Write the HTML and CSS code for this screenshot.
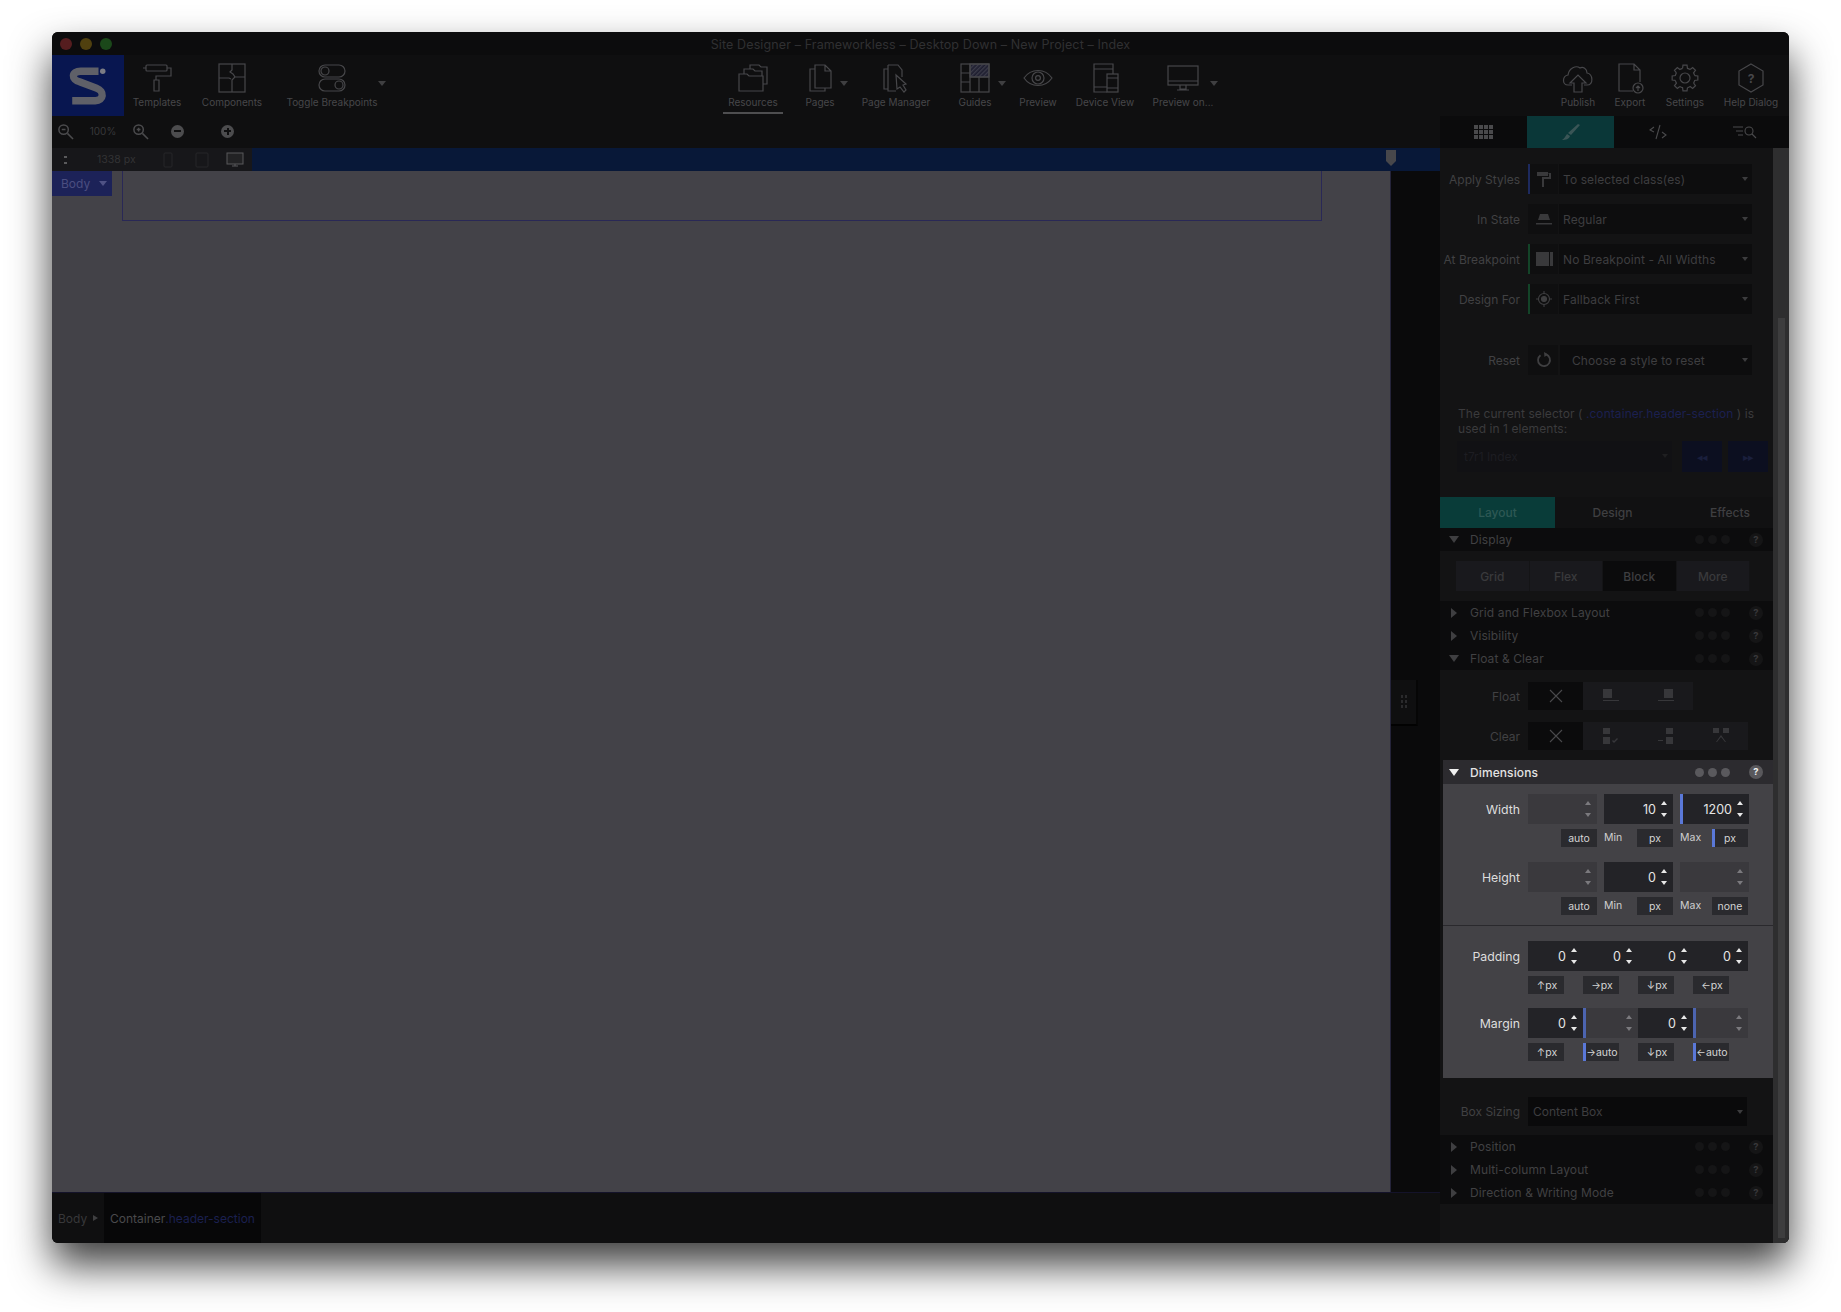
FILE: index.html
```html
<!DOCTYPE html>
<html lang="en">
<head>
<meta charset="utf-8">
<title>Site Designer</title>
<link rel="stylesheet" href="styles.css">
</head>
<body>
<svg class="defs" width="0" height="0" aria-hidden="true">
  <defs>
    <path id="gear-tooth" d="M13.58 6.3 13.97 3.16H18.03L18.42 6.3A10 10 0 0 1 21.15 7.43"/>
    <pattern id="hatch" width="3" height="3" patternUnits="userSpaceOnUse" patternTransform="rotate(45)">
      <rect width="3" height="3" fill="#1f1f30"/>
      <rect width="1.3" height="3" fill="#3c3c4a"/>
    </pattern>
  </defs>
</svg>
<div class="window">
  <header class="titlebar">
    <div class="lights"><span class="light red"></span><span class="light amber"></span><span class="light green"></span></div>
    <div class="title">Site Designer – Frameworkless – Desktop Down – New Project – Index</div>
    <div></div>
  </header>

  <nav class="toolbar">
    <div class="logo">
      <svg width="38" height="40" viewBox="0 0 36 38" fill="none">
        <path d="M28 5H11C2 5 2 13 10 15L26 21C34 24 33 33 25 33H3" stroke="#5f6068" stroke-width="7"/>
        <circle cx="32" cy="5" r="2.6" fill="#7b7c84"/>
      </svg>
    </div>
    <div class="tools tools-left">
      <div class="tool w66">
        <svg class="tool-icon" viewBox="0 0 32 32"><rect x="5" y="3" width="21" height="6" rx="1"/><path d="M5 6H2M26 6h4v8H15v4"/><path d="M13 18h5v11h-5z"/></svg>
        <span>Templates</span>
      </div>
      <div class="tool w84">
        <svg class="tool-icon" viewBox="0 0 32 32"><rect x="3" y="2" width="26" height="28"/><path d="M16 2v6l-2 2 3 2 2 3-3 3v12M3 16h10l2 1M18 15h11"/></svg>
        <span>Components</span>
      </div>
      <div class="tool w116">
        <svg class="tool-icon" viewBox="0 0 32 32"><rect x="3" y="3" width="26" height="12" rx="6"/><rect x="3" y="17" width="26" height="12" rx="6"/><circle cx="9" cy="9" r="4"/><circle cx="23" cy="23" r="4"/></svg>
        <span>Toggle Breakpoints</span>
        <i class="tool-arrow"></i>
      </div>
    </div>
    <div class="tools tools-center">
      <div class="tool tool-active w70">
        <svg class="tool-icon" viewBox="0 0 32 32"><path d="M2 12h8l2 2h14v15H2zM7 12V7h9l2 2h7v5M13 7V3h9l2 2h6v17h-4"/></svg>
        <span>Resources</span>
      </div>
      <div class="tool w64">
        <svg class="tool-icon" viewBox="0 0 32 32"><path d="M11 3h10l6 6v17H11zM21 3v6h6M11 7H6v22h15v-3"/></svg>
        <span>Pages</span>
        <i class="tool-arrow"></i>
      </div>
      <div class="tool w88">
        <svg class="tool-icon" viewBox="0 0 32 32"><path d="M8 27H4V7h4M8 3h10l4 5v7M8 3v26h8"/><path d="M16 13l10 9-3 1 3 5-2 2-4-5-3 2z"/></svg>
        <span>Page Manager</span>
      </div>
      <div class="tool w70">
        <svg class="tool-icon" viewBox="0 0 32 32"><rect x="11" y="2" width="19" height="13" fill="url(#hatch)"/><rect x="2" y="2" width="28" height="28"/><path d="M11 2v28M2 11h9M2 20h9M11 15h19M20 15v15"/></svg>
        <span>Guides</span>
        <i class="tool-arrow"></i>
      </div>
      <div class="tool w56">
        <svg class="tool-icon" viewBox="0 0 32 32"><path d="M2 16c7-10 21-10 28 0-7 10-21 10-28 0z"/><circle cx="16" cy="16" r="6"/><circle cx="16" cy="16" r="2.4"/></svg>
        <span>Preview</span>
      </div>
      <div class="tool w78">
        <svg class="tool-icon" viewBox="0 0 32 32"><path d="M18 30H5V2h19v10M5 7h19M5 25h13"/><rect x="18" y="12" width="11" height="18"/><path d="M18 16h11M18 26h11"/></svg>
        <span>Device View</span>
      </div>
      <div class="tool w78">
        <svg class="tool-icon" viewBox="0 0 32 32"><rect x="1" y="4" width="30" height="19"/><path d="M1 19h30M13 23v4h6v-4M10 28h12"/></svg>
        <span>Preview on...</span>
        <i class="tool-arrow"></i>
      </div>
    </div>
    <div class="tools tools-right">
      <div class="tool w52">
        <svg class="tool-icon" viewBox="0 0 32 32"><path d="M10 23H6C0 23 0 14 6 13 7 6 14 3 18 6c3-2 7 1 7 5 6 1 7 12 0 12h-3"/><path d="M12 30v-9H8l8-8 8 8h-4v9z"/></svg>
        <span>Publish</span>
      </div>
      <div class="tool w52">
        <svg class="tool-icon" viewBox="0 0 32 32"><path d="M19 29H5V2h15l6 6v12M20 2v6h6"/><circle cx="24" cy="26" r="5"/><path d="M24 29v-5M22 26l2-2 2 2"/></svg>
        <span>Export</span>
      </div>
      <div class="tool w58">
        <svg class="tool-icon" viewBox="0 0 32 32">
          <use href="#gear-tooth"/><use href="#gear-tooth" transform="rotate(45 16 16)"/><use href="#gear-tooth" transform="rotate(90 16 16)"/><use href="#gear-tooth" transform="rotate(135 16 16)"/><use href="#gear-tooth" transform="rotate(180 16 16)"/><use href="#gear-tooth" transform="rotate(225 16 16)"/><use href="#gear-tooth" transform="rotate(270 16 16)"/><use href="#gear-tooth" transform="rotate(315 16 16)"/>
          <circle cx="16" cy="16" r="5"/>
        </svg>
        <span>Settings</span>
      </div>
      <div class="tool w74">
        <svg class="tool-icon" viewBox="0 0 32 32"><path d="M16 2l12 7v14l-12 7-12-7V9z"/><text class="help-mark" x="16" y="21" text-anchor="middle">?</text></svg>
        <span>Help Dialog</span>
      </div>
    </div>
  </nav>

  <div class="main">
    <section class="workspace">
      <div class="zoombar">
        <svg class="zoom-icon" viewBox="0 0 18 18"><circle cx="7" cy="7" r="5"/><path d="M11 11l6 6M5 7h4"/></svg>
        <span class="zoom-value">100%</span>
        <svg class="zoom-icon" viewBox="0 0 18 18"><circle cx="7" cy="7" r="5"/><path d="M11 11l6 6M5 7h4M7 5v4"/></svg>
        <span class="zoom-btn zoom-minus"></span>
        <span class="zoom-btn zoom-plus"></span>
      </div>
      <div class="ruler">
        <div class="ruler-head">
          <span class="ruler-dots"></span>
          <span class="ruler-size">1338 px</span>
          <svg class="ruler-dev dev-phone" viewBox="0 0 12 16"><rect x="2" y="1" width="8" height="14" rx="1"/></svg>
          <svg class="ruler-dev dev-tablet" viewBox="0 0 14 16"><rect x="1" y="1" width="12" height="14" rx="1"/></svg>
          <svg class="ruler-dev dev-desktop" viewBox="0 0 18 16"><rect x="1" y="1" width="16" height="11"/><path d="M6 14h6M9 12v2"/></svg>
        </div>
        <svg class="ruler-thumb" width="10" height="16" viewBox="0 0 10 16"><path d="M0 0h10v11l-5 5-5-5z"/></svg>
      </div>
      <div class="stage">
        <div class="canvas">
          <div class="body-tag">Body <i class="caret-tag"></i></div>
          <div class="outline"></div>
        </div>
        <div class="gutter">
          <div class="splitter"><span class="splitter-dots"></span></div>
        </div>
      </div>
      <footer class="status">
        <div class="crumb">Body <i class="crumb-arrow"></i></div>
        <div class="crumb crumb-current">Container<span class="link">.header-section</span></div>
      </footer>
    </section>

    <aside class="side">
      <div class="side-tabs">
        <div class="side-tab">
          <svg width="20" height="14" viewBox="0 0 20 14" class="icon-fill"><path d="M0 0h4v4H0zM5 0h4v4H5zM10 0h4v4h-4zM15 0h4v4h-4zM0 5h4v4H0zM5 5h4v4H5zM10 5h4v4h-4zM15 5h4v4h-4zM0 10h4v4H0zM5 10h4v4H5zM10 10h4v4h-4zM15 10h4v4h-4z"/></svg>
        </div>
        <div class="side-tab side-tab-active">
          <svg width="18" height="16" viewBox="0 0 18 16" class="icon-fill"><path d="M16 0l2 1-9 10-3-2zM5 10l3 2c-1 3-4 4-8 4 2-1 3-3 5-6z"/></svg>
        </div>
        <div class="side-tab">
          <svg width="18" height="16" viewBox="0 0 18 16" class="icon-line"><path d="M5 3L1 6l4 2M13 8l4 3-4 3M11 1L7 15"/></svg>
        </div>
        <div class="side-tab">
          <svg width="24" height="14" viewBox="0 0 24 14" class="icon-line"><path d="M0 2h10M3 6h7M5 10h5"/><circle cx="16" cy="6" r="4"/><path d="M19 9l4 4"/></svg>
        </div>
      </div>
      <div class="side-body">
        <div class="panel">
          <div class="opt-group">
            <div class="opt-row">
              <label class="opt-label">Apply Styles</label>
              <div class="picker">
                <span class="picker-icon strip-blue"><svg width="16" height="16" viewBox="0 0 16 16" class="icon-fill"><path d="M1 1h11v4H1zM12 2h3v6H8v2H6V6h7V3zM6 10h2v6H6z"/></svg></span>
                <div class="select">To selected class(es)<i class="caret"></i></div>
              </div>
            </div>
            <div class="opt-row">
              <label class="opt-label">In State</label>
              <div class="picker">
                <span class="picker-icon"><svg width="16" height="12" viewBox="0 0 16 12" class="icon-fill"><path d="M4 1h8l2 6H2zM0 10h16v1.500H0z"/></svg></span>
                <div class="select">Regular<i class="caret"></i></div>
              </div>
            </div>
            <div class="opt-row">
              <label class="opt-label">At Breakpoint</label>
              <div class="picker">
                <span class="picker-icon strip-green"><svg width="17" height="14" viewBox="0 0 17 14" class="icon-fill"><path d="M0 0h13v14H0zM14 0h3v14h-3z"/></svg></span>
                <div class="select">No Breakpoint - All Widths<i class="caret"></i></div>
              </div>
            </div>
            <div class="opt-row">
              <label class="opt-label">Design For</label>
              <div class="picker">
                <span class="picker-icon strip-green"><svg width="16" height="16" viewBox="0 0 16 16" class="icon-line"><circle cx="8" cy="8" r="5.500"/><circle class="icon-dot" cx="8" cy="8" r="2.500"/><path d="M8 0v3M8 13v3M0 8h3M13 8h3"/></svg></span>
                <div class="select">Fallback First<i class="caret"></i></div>
              </div>
            </div>
          </div>

          <div class="opt-row reset-row">
            <label class="opt-label">Reset</label>
            <div class="picker">
              <span class="picker-icon picker-gap"><svg width="16" height="16" viewBox="0 0 16 16" class="icon-line icon-thick"><path d="M4.500 3.200A6 6 0 1 0 10 2.400"/><path class="icon-head" d="M8 0l4 2.200L8.500 5z"/></svg></span>
              <div class="select select-indent">Choose a style to reset<i class="caret"></i></div>
            </div>
          </div>

          <p class="selector-note">The current selector ( <span class="link">.container.header-section</span> ) is used in 1 elements:</p>
          <div class="selector-tools">
            <div class="selector-select">t7r1 Index<i class="caret caret-faint"></i></div>
            <div class="nav-btn">◂◂</div>
            <div class="nav-btn">▸▸</div>
          </div>

          <div class="sub-tabs">
            <div class="sub-tab sub-tab-active">Layout</div>
            <div class="sub-tab">Design</div>
            <div class="sub-tab">Effects</div>
          </div>

          <div class="head"><i class="tri tri-down"></i><span class="head-name">Display</span><span class="dots"><i></i><i></i><i></i></span><b class="help">?</b></div>
          <div class="display-body">
            <div class="seg">Grid</div><div class="seg">Flex</div><div class="seg seg-on">Block</div><div class="seg">More</div>
          </div>
          <div class="head"><i class="tri tri-right"></i><span class="head-name">Grid and Flexbox Layout</span><span class="dots"><i></i><i></i><i></i></span><b class="help">?</b></div>
          <div class="head"><i class="tri tri-right"></i><span class="head-name">Visibility</span><span class="dots"><i></i><i></i><i></i></span><b class="help">?</b></div>
          <div class="head"><i class="tri tri-down"></i><span class="head-name">Float &amp; Clear</span><span class="dots"><i></i><i></i><i></i></span><b class="help">?</b></div>
          <div class="float-body">
            <div class="float-row">
              <label class="opt-label">Float</label>
              <div class="float-btn float-on"><svg width="14" height="14" viewBox="0 0 14 14" class="icon-line"><path d="M1 1l12 12M13 1L1 13"/></svg></div>
              <div class="float-btn"><svg width="16" height="14" viewBox="0 0 16 14" class="icon-fill"><path d="M0 0h9v9H0zM0 11h16v1H0z"/></svg></div>
              <div class="float-btn"><svg width="16" height="14" viewBox="0 0 16 14" class="icon-fill"><path d="M6 0h9v9H6zM0 11h16v1H0z"/></svg></div>
            </div>
            <div class="float-row">
              <label class="opt-label">Clear</label>
              <div class="float-btn float-on"><svg width="14" height="14" viewBox="0 0 14 14" class="icon-line"><path d="M1 1l12 12M13 1L1 13"/></svg></div>
              <div class="float-btn"><svg width="16" height="16" viewBox="0 0 16 16" class="icon-fill"><path d="M0 0h7v6H0zM0 9h7v7H0zM9 13l1-1 1 1 3-3 1 1-4 4z"/></svg></div>
              <div class="float-btn"><svg width="16" height="16" viewBox="0 0 16 16" class="icon-fill"><path d="M8 0h7v6H8zM8 9h7v7H8zM0 12h5v1H0z"/></svg></div>
              <div class="float-btn"><svg width="16" height="16" viewBox="0 0 16 16" class="icon-fill"><path d="M0 0h6v5H0zM10 0h6v5h-6zM3 14l5-7 5 7h-1L8 9l-4 5z"/></svg></div>
            </div>
          </div>

          <section class="dims">
            <div class="head dims-head"><i class="tri tri-down"></i><span class="head-name">Dimensions</span><span class="dots"><i></i><i></i><i></i></span><b class="help">?</b></div>
            <div class="dims-body">
              <div class="dim-block">
                <div class="dim-row">
                  <label class="dim-label">Width</label>
                  <div class="field"><span class="stepper stepper-dim"></span></div>
                  <div class="field field-dark">10<span class="stepper"></span></div>
                  <div class="field field-dark marked">1200<span class="stepper"></span></div>
                </div>
                <div class="unit-row">
                  <div class="unit-cell"><span class="unit">auto</span></div>
                  <div class="unit-cell"><span class="unit-name">Min</span><span class="unit">px</span></div>
                  <div class="unit-cell"><span class="unit-name">Max</span><span class="unit marked">px</span></div>
                </div>
              </div>
              <div class="dim-block">
                <div class="dim-row">
                  <label class="dim-label">Height</label>
                  <div class="field"><span class="stepper stepper-dim"></span></div>
                  <div class="field field-dark">0<span class="stepper"></span></div>
                  <div class="field"><span class="stepper stepper-dim"></span></div>
                </div>
                <div class="unit-row">
                  <div class="unit-cell"><span class="unit">auto</span></div>
                  <div class="unit-cell"><span class="unit-name">Min</span><span class="unit">px</span></div>
                  <div class="unit-cell"><span class="unit-name">Max</span><span class="unit">none</span></div>
                </div>
              </div>
              <div class="dim-sep"></div>
              <div class="box-block">
                <div class="dim-row box-row">
                  <label class="dim-label">Padding</label>
                  <div class="boxes">
                    <div class="box-field">0<span class="stepper"></span></div>
                    <div class="box-field">0<span class="stepper"></span></div>
                    <div class="box-field">0<span class="stepper"></span></div>
                    <div class="box-field">0<span class="stepper"></span></div>
                  </div>
                </div>
                <div class="box-units">
                  <div class="box-unit"><span>↑</span>px</div>
                  <div class="box-unit"><span>→</span>px</div>
                  <div class="box-unit"><span>↓</span>px</div>
                  <div class="box-unit"><span>←</span>px</div>
                </div>
              </div>
              <div class="box-block">
                <div class="dim-row box-row">
                  <label class="dim-label">Margin</label>
                  <div class="boxes">
                    <div class="box-field">0<span class="stepper"></span></div>
                    <div class="box-field box-auto"><span class="stepper stepper-dim"></span></div>
                    <div class="box-field">0<span class="stepper"></span></div>
                    <div class="box-field box-auto"><span class="stepper stepper-dim"></span></div>
                  </div>
                </div>
                <div class="box-units">
                  <div class="box-unit"><span>↑</span>px</div>
                  <div class="box-unit marked"><span>→</span>auto</div>
                  <div class="box-unit"><span>↓</span>px</div>
                  <div class="box-unit marked"><span>←</span>auto</div>
                </div>
              </div>
            </div>
          </section>

          <div class="sizing-row">
            <label class="opt-label">Box Sizing</label>
            <div class="sizing-select">Content Box<i class="caret"></i></div>
          </div>

          <div class="head"><i class="tri tri-right"></i><span class="head-name">Position</span><span class="dots"><i></i><i></i><i></i></span><b class="help">?</b></div>
          <div class="head"><i class="tri tri-right"></i><span class="head-name">Multi-column Layout</span><span class="dots"><i></i><i></i><i></i></span><b class="help">?</b></div>
          <div class="head"><i class="tri tri-right"></i><span class="head-name">Direction &amp; Writing Mode</span><span class="dots"><i></i><i></i><i></i></span><b class="help">?</b></div>
        </div>
        <div class="scrollbar"><div class="scroll-thumb"></div></div>
      </div>
    </aside>
  </div>
</div>
</body>
</html>
```

FILE: styles.css
```css
* { box-sizing: border-box; }
html, body { margin: 0; height: 100%; }
body {
  width: 1841px;
  height: 1312px;
  overflow: hidden;
  background: #fff;
  padding: 32px 0 0 52px;
  font-family: Inter, "Liberation Sans", sans-serif;
  font-size: 12px;
  color: #48484a;
}
.defs { position: absolute; }
i { display: block; font-style: normal; }
label { display: block; }
p { margin: 0; }

.window {
  width: 1737px;
  height: 1211px;
  background: #0f0f10;
  border-radius: 6px;
  overflow: hidden;
  display: flex;
  flex-direction: column;
  box-shadow: 0 22px 40px rgba(0,0,0,.76);
}

/* title bar */
.titlebar {
  height: 23px;
  flex: none;
  display: grid;
  grid-template-columns: 1fr auto 1fr;
  align-items: center;
  background: #0c0c0d;
  padding-top: 1px;
}
.lights { display: flex; gap: 8px; padding-left: 8px; }
.light { width: 12px; height: 12px; border-radius: 50%; }
.red { background: #551d1f; }
.amber { background: #50400f; }
.green { background: #1b481a; }
.title { font-size: 12.5px; color: #303032; letter-spacing: .12px; }

/* toolbar */
.toolbar {
  height: 61px;
  flex: none;
  display: flex;
  background: #0f0f10;
}
.logo {
  width: 72px;
  flex: none;
  background: #081650;
  display: flex;
  align-items: center;
  justify-content: center;
}
.tools { display: flex; align-items: flex-start; flex: none; }
.tools-center { margin-left: 328px; }
.tools-right { margin-left: 330px; }
.w52 { width: 52px; }
.w56 { width: 56px; }
.w58 { width: 58px; }
.w64 { width: 64px; }
.w66 { width: 66px; }
.w70 { width: 70px; }
.w74 { width: 74px; }
.w78 { width: 78px; }
.w84 { width: 84px; }
.w88 { width: 88px; }
.w116 { width: 116px; }
.tool {
  position: relative;
  display: flex;
  flex-direction: column;
  align-items: center;
  flex: none;
  padding-top: 7px;
  height: 61px;
  font-size: 10px;
  color: #47474a;
  white-space: nowrap;
}
.tool-icon {
  width: 32px;
  height: 32px;
  fill: none;
  stroke: #47474a;
  stroke-width: 1.2;
  margin-bottom: 2px;
}
.tool-arrow {
  position: absolute;
  right: 4px;
  top: 26px;
  width: 0;
  height: 0;
  border: 4px solid transparent;
  border-top: 5px solid #3f3f41;
  border-bottom: 0;
}
.tool-active::after {
  content: "";
  position: absolute;
  left: 5px;
  right: 5px;
  top: 57px;
  height: 2px;
  background: #4e4e50;
}
.help-mark { font-size: 12px; font-weight: 700; fill: #47474a; stroke: none; font-family: Inter, sans-serif; }

/* main */
.main { flex: 1; min-height: 0; display: flex; }
.workspace { width: 1388px; flex: none; display: flex; flex-direction: column; }

.zoombar {
  height: 32px;
  flex: none;
  display: flex;
  align-items: center;
  padding: 0 0 2px 5px;
  background: #0f0f10;
}
.zoom-icon { width: 17px; height: 17px; fill: none; stroke: #4b4b4d; stroke-width: 1.6; }
.zoom-value { width: 58px; text-align: center; font-size: 10px; color: #38383a; }
.zoom-btn {
  position: relative;
  width: 13px;
  height: 13px;
  border-radius: 50%;
  background: #4c4c4e;
}
.zoom-btn::before {
  content: "";
  position: absolute;
  left: 3px;
  top: 5.500px;
  width: 7px;
  height: 2px;
  background: #0f0f10;
}
.zoom-minus { margin-left: 22px; }
.zoom-plus { margin-left: 37px; }
.zoom-plus::after {
  content: "";
  position: absolute;
  left: 5.500px;
  top: 3px;
  width: 2px;
  height: 7px;
  background: #0f0f10;
}

.ruler {
  height: 23px;
  flex: none;
  display: flex;
  background: #081838;
  position: relative;
}
.ruler-head {
  width: 200px;
  display: flex;
  align-items: center;
  background: #17171a;
  padding-left: 12px;
}
.ruler-dots { width: 3px; height: 12px; background: radial-gradient(circle, #5a5a5c 1.300px, transparent 1.500px) 0 0 / 3px 6px; }
.ruler-size { margin-left: 30px; width: 64px; font-size: 10.5px; color: #333335; }
.ruler-dev { fill: none; stroke: #262628; stroke-width: 1; }
.dev-phone { width: 14px; height: 16px; }
.dev-tablet { width: 14px; height: 16px; margin-left: 20px; }
.dev-desktop { width: 18px; height: 16px; margin-left: 17px; stroke: #58585a; fill: #222224; }
.ruler-thumb { position: absolute; left: 1334px; top: 2px; fill: #47474b; }

.stage { flex: 1; min-height: 0; display: flex; }
.canvas {
  width: 1339px;
  flex: none;
  background: #434248;
  border-right: 1px solid #25243a;
  display: flex;
  align-items: flex-start;
}
.body-tag {
  width: 60px;
  height: 25px;
  background: #1c2258;
  color: #4b4e80;
  font-size: 12px;
  display: flex;
  align-items: center;
  padding-left: 9px;
  gap: 9px;
  flex: none;
}
.caret-tag {
  width: 0;
  height: 0;
  border: 4px solid transparent;
  border-top: 5px solid #4f5285;
  border-bottom: 0;
}
.outline {
  width: 1200px;
  height: 50px;
  margin-left: 10px;
  border: 1px solid #292856;
  border-top: 0;
  flex: none;
}
.gutter {
  flex: 1;
  background: #0a0a0b;
  padding-top: 509px;
}
.splitter {
  width: 27px;
  height: 46px;
  background: #0f0f10;
  border-right: 2px solid #060606;
  border-bottom: 2px solid #020202;
  display: flex;
  align-items: center;
  justify-content: center;
}
.splitter-dots {
  width: 8px;
  height: 16px;
  background: radial-gradient(circle, #2a2a2c 1.300px, transparent 1.500px) 0 0 / 4px 5px;
}

.status {
  height: 51px;
  flex: none;
  display: flex;
  background: #0f0f10;
  font-size: 12px;
  border-top: 1px solid #14132a;
}
.crumb {
  display: flex;
  align-items: center;
  padding-left: 6px;
  width: 52px;
  gap: 6px;
  color: #38383a;
}
.crumb-arrow {
  width: 0;
  height: 0;
  border: 3.500px solid transparent;
  border-left: 5px solid #3f3f41;
  border-right: 0;
}
.crumb-current {
  width: 157px;
  background: #070708;
  gap: 0;
  color: #4a4a4c;
}
.link { color: #1b2050; }

/* side */
.side { width: 349px; flex: none; display: flex; flex-direction: column; background: #131314; }
.side-tabs {
  height: 32px;
  flex: none;
  display: grid;
  grid-template-columns: repeat(4, 87px);
  background: #0b0b0c;
}
.side-tab { display: flex; align-items: center; justify-content: center; }
.side-tab-active { background: #0a3738; }
.icon-fill { fill: #4a4a4c; }
.side-tab-active .icon-fill { fill: #3a5556; }
.picker-icon .icon-fill { fill: #39393b; }
.icon-line { fill: none; stroke: #4a4a4c; stroke-width: 1.100; }
.picker-icon .icon-line { stroke: #3f3f41; }
.icon-thick { stroke-width: 1.800; }
.icon-dot { fill: #3f3f41; }
.icon-head { fill: #3f3f41; stroke: none; }

.side-body { flex: 1; min-height: 0; display: flex; }
.panel { width: 333px; flex: none; }
.scrollbar {
  width: 16px;
  flex: none;
  background: #2e2e2f;
  padding: 170px 4px 0 5px;
}
.scroll-thumb { height: 920px; background: #3d3d3e; }

.opt-group { display: flex; flex-direction: column; gap: 10px; padding-top: 16px; }
.opt-row { display: flex; align-items: center; height: 30px; }
.opt-label {
  width: 80px;
  flex: none;
  text-align: right;
  color: #414143;
  font-size: 12px;
  white-space: nowrap;
}
.picker { margin-left: 8px; flex: none; width: 224px; height: 30px; display: flex; }
.picker-icon {
  width: 30px;
  flex: none;
  display: flex;
  align-items: center;
  justify-content: center;
  background: #0f0f10;
  border-left: 2px solid transparent;
}
.strip-blue { border-left-color: #1d2a5f; }
.strip-green { border-left-color: #134428; }
.picker-gap { margin-right: 2px; }
.select {
  position: relative;
  flex: 1;
  display: flex;
  align-items: center;
  background: #0d0d0e;
  padding-left: 4px;
  margin-left: 1px;
  color: #3e3e40;
  font-size: 12px;
  letter-spacing: .1px;
}
.select-indent { padding-left: 12px; margin-left: 0; }
.caret {
  position: absolute;
  right: 4px;
  top: 13px;
  width: 0;
  height: 0;
  border: 3px solid transparent;
  border-top: 4px solid #3c3c3e;
  border-bottom: 0;
}
.caret-faint { border-top-color: #1f1f21; }
.reset-row { margin-top: 31px; margin-bottom: 1px; }

.selector-note {
  margin-top: 31px;
  padding-left: 18px;
  width: 330px;
  line-height: 15px;
  color: #3b3b3d;
  font-size: 12px;
  letter-spacing: .07px;
}
.selector-tools {
  display: flex;
  gap: 6px;
  margin-top: 5px;
  padding-left: 17px;
  height: 31px;
}
.selector-select {
  position: relative;
  width: 215px;
  background: #111114;
  margin-right: 4px;
  display: flex;
  align-items: center;
  padding-left: 7px;
  color: #1d1d22;
}
.nav-btn {
  width: 40px;
  background: #0c0f20;
  color: #1a1f3c;
  display: flex;
  align-items: center;
  justify-content: center;
  font-size: 11px;
  letter-spacing: -1px;
}

.sub-tabs {
  display: grid;
  grid-template-columns: 115px 115px 103px;
  height: 31px;
  margin-top: 25px;
  background: #111112;
}
.sub-tab { display: flex; align-items: center; justify-content: center; color: #3f3f41; font-weight: 500; }
.sub-tab:last-child { justify-content: flex-end; padding-right: 23px; }
.sub-tab-active { background: #093c39; color: #2d5854; }

.head {
  height: 23px;
  display: flex;
  align-items: center;
  padding-left: 9px;
  background: #0c0c0d;
  position: relative;
}
.head-name { margin-left: 11px; color: #414143; font-size: 12px; letter-spacing: .1px; }
.tri { width: 10px; display: block; flex: none; }
.tri-down { width: 0; height: 0; border: 5px solid transparent; border-top: 7px solid #3f3f41; border-bottom: 0; }
.tri-right { width: 0; height: 0; margin-right: 2px; margin-left: 2px; border: 5px solid transparent; border-left: 6px solid #3f3f41; border-right: 0; }
.dots { position: absolute; left: 255px; display: flex; gap: 4px; }
.dots i { width: 9px; height: 9px; border-radius: 50%; background: #151516; }
.help {
  position: absolute;
  left: 309px;
  width: 14px;
  height: 14px;
  border-radius: 50%;
  background: #151516;
  color: #38383a;
  font-size: 9.500px;
  line-height: 14px;
  text-align: center;
}
.display-body {
  height: 50px;
  padding: 10px 0 0 16px;
  display: grid;
  grid-template-columns: repeat(4, 73.500px);
  background: #131314;
}
.seg {
  height: 30px;
  display: flex;
  align-items: center;
  justify-content: center;
  background: #19191d;
  color: #39393c;
  font-weight: 500;
  border-right: 1px solid #141416;
}
.seg-on { background: #0b0b0c; color: #3f3f41; }

.float-body {
  height: 90px;
  padding-top: 12px;
  display: flex;
  flex-direction: column;
  gap: 12px;
}
.float-row { display: flex; align-items: center; height: 28px; }
.float-row .opt-label { margin-right: 8px; }
.float-btn {
  width: 55px;
  height: 28px;
  background: #19191c;
  display: flex;
  align-items: center;
  justify-content: center;
}
.float-btn .icon-fill { fill: #37373a; }
.float-on { background: #0b0b0c; }
.float-on .icon-line { stroke: #4a4a4c; }

/* spotlighted dimensions */
.dims { margin-left: 3px; width: 330px; height: 318px; background: #434246; color: #dcdcdc; display: flex; flex-direction: column; }
.dims-head { height: 24px; flex: none; background: #2c2b2f; padding-left: 6px; }
.dims-head .head-name { color: #e4e4e4; font-weight: 500; }
.dims-head .tri-down { border-top-color: #f0f0f0; }
.dims-head .dots { left: 252px; }
.dims-head .dots i { background: #5a595d; }
.dims-head .help { left: 306px; background: #59585c; color: #eee; }
.dims-body { flex: 1; padding-top: 10px; }
.dim-block { height: 68px; }
.dim-block + .dim-block { height: 63px; }
.dim-row { display: flex; height: 30px; align-items: center; }
.dim-label { width: 77px; flex: none; text-align: right; font-size: 12.300px; color: #dedede; margin-right: 8px; }
.field {
  position: relative;
  width: 69px;
  height: 30px;
  margin-right: 7px;
  background: #3a393d;
  display: flex;
  align-items: center;
  justify-content: flex-end;
  padding-right: 17px;
  font-size: 12.500px;
}
.field-dark { background: #232327; color: #e6e6e6; }
.stepper { position: absolute; right: 5px; top: 7px; width: 7px; height: 16px; }
.stepper::before, .stepper::after {
  content: "";
  position: absolute;
  left: 0;
  width: 0;
  height: 0;
  border: 3.500px solid transparent;
}
.stepper::before { top: 0; border-bottom: 4.500px solid #e8e8e8; border-top: 0; }
.stepper::after { bottom: 0; border-top: 4.500px solid #e8e8e8; border-bottom: 0; }
.stepper-dim::before { border-bottom-color: #7b7a7e; }
.stepper-dim::after { border-top-color: #7b7a7e; }
.marked { box-shadow: inset 3px 0 0 #5a78d8; }
.unit-row { display: flex; margin: 5px 0 0 85px; }
.unit-cell {
  width: 69px;
  margin-right: 7px;
  height: 18px;
  display: flex;
  justify-content: flex-end;
  position: relative;
}
.unit-name { position: absolute; left: 0; top: 2px; font-size: 10.500px; color: #cfcfcf; }
.unit {
  width: 36px;
  height: 18px;
  background: #2a2a2e;
  color: #d4d4d4;
  font-size: 10.500px;
  line-height: 19px;
  text-align: center;
}
.unit-cell:last-child { width: 69px; margin-right: 0; padding-right: 1px; }
.dim-sep { height: 1px; background: #2a292d; margin: 0 0 15px; }
.box-block { height: 67px; }
.boxes { display: grid; grid-template-columns: repeat(4, 55px); }
.box-field {
  position: relative;
  height: 30px;
  background: #232327;
  color: #e6e6e6;
  font-size: 12.500px;
  display: flex;
  align-items: center;
  justify-content: flex-end;
  padding-right: 17px;
}
.box-auto { background: #3a393d; box-shadow: inset 3px 0 0 #4c64b0; }
.box-units { display: grid; grid-template-columns: repeat(4, 36px); column-gap: 19px; margin: 5px 0 0 85px; }
.box-unit {
  height: 18px;
  background: #2a2a2e;
  color: #d4d4d4;
  font-size: 10.500px;
  line-height: 19px;
  text-align: center;
  white-space: nowrap;
  padding-left: 2px;
}
.box-unit span { font-size: 10px; }

.sizing-row { display: flex; align-items: center; height: 29px; margin: 19px 0 9px; }
.sizing-row .opt-label { margin-right: 8px; }
.sizing-select {
  position: relative;
  width: 219px;
  height: 29px;
  background: #0a0a0b;
  display: flex;
  align-items: center;
  padding-left: 5px;
  color: #3e3e40;
}
```
